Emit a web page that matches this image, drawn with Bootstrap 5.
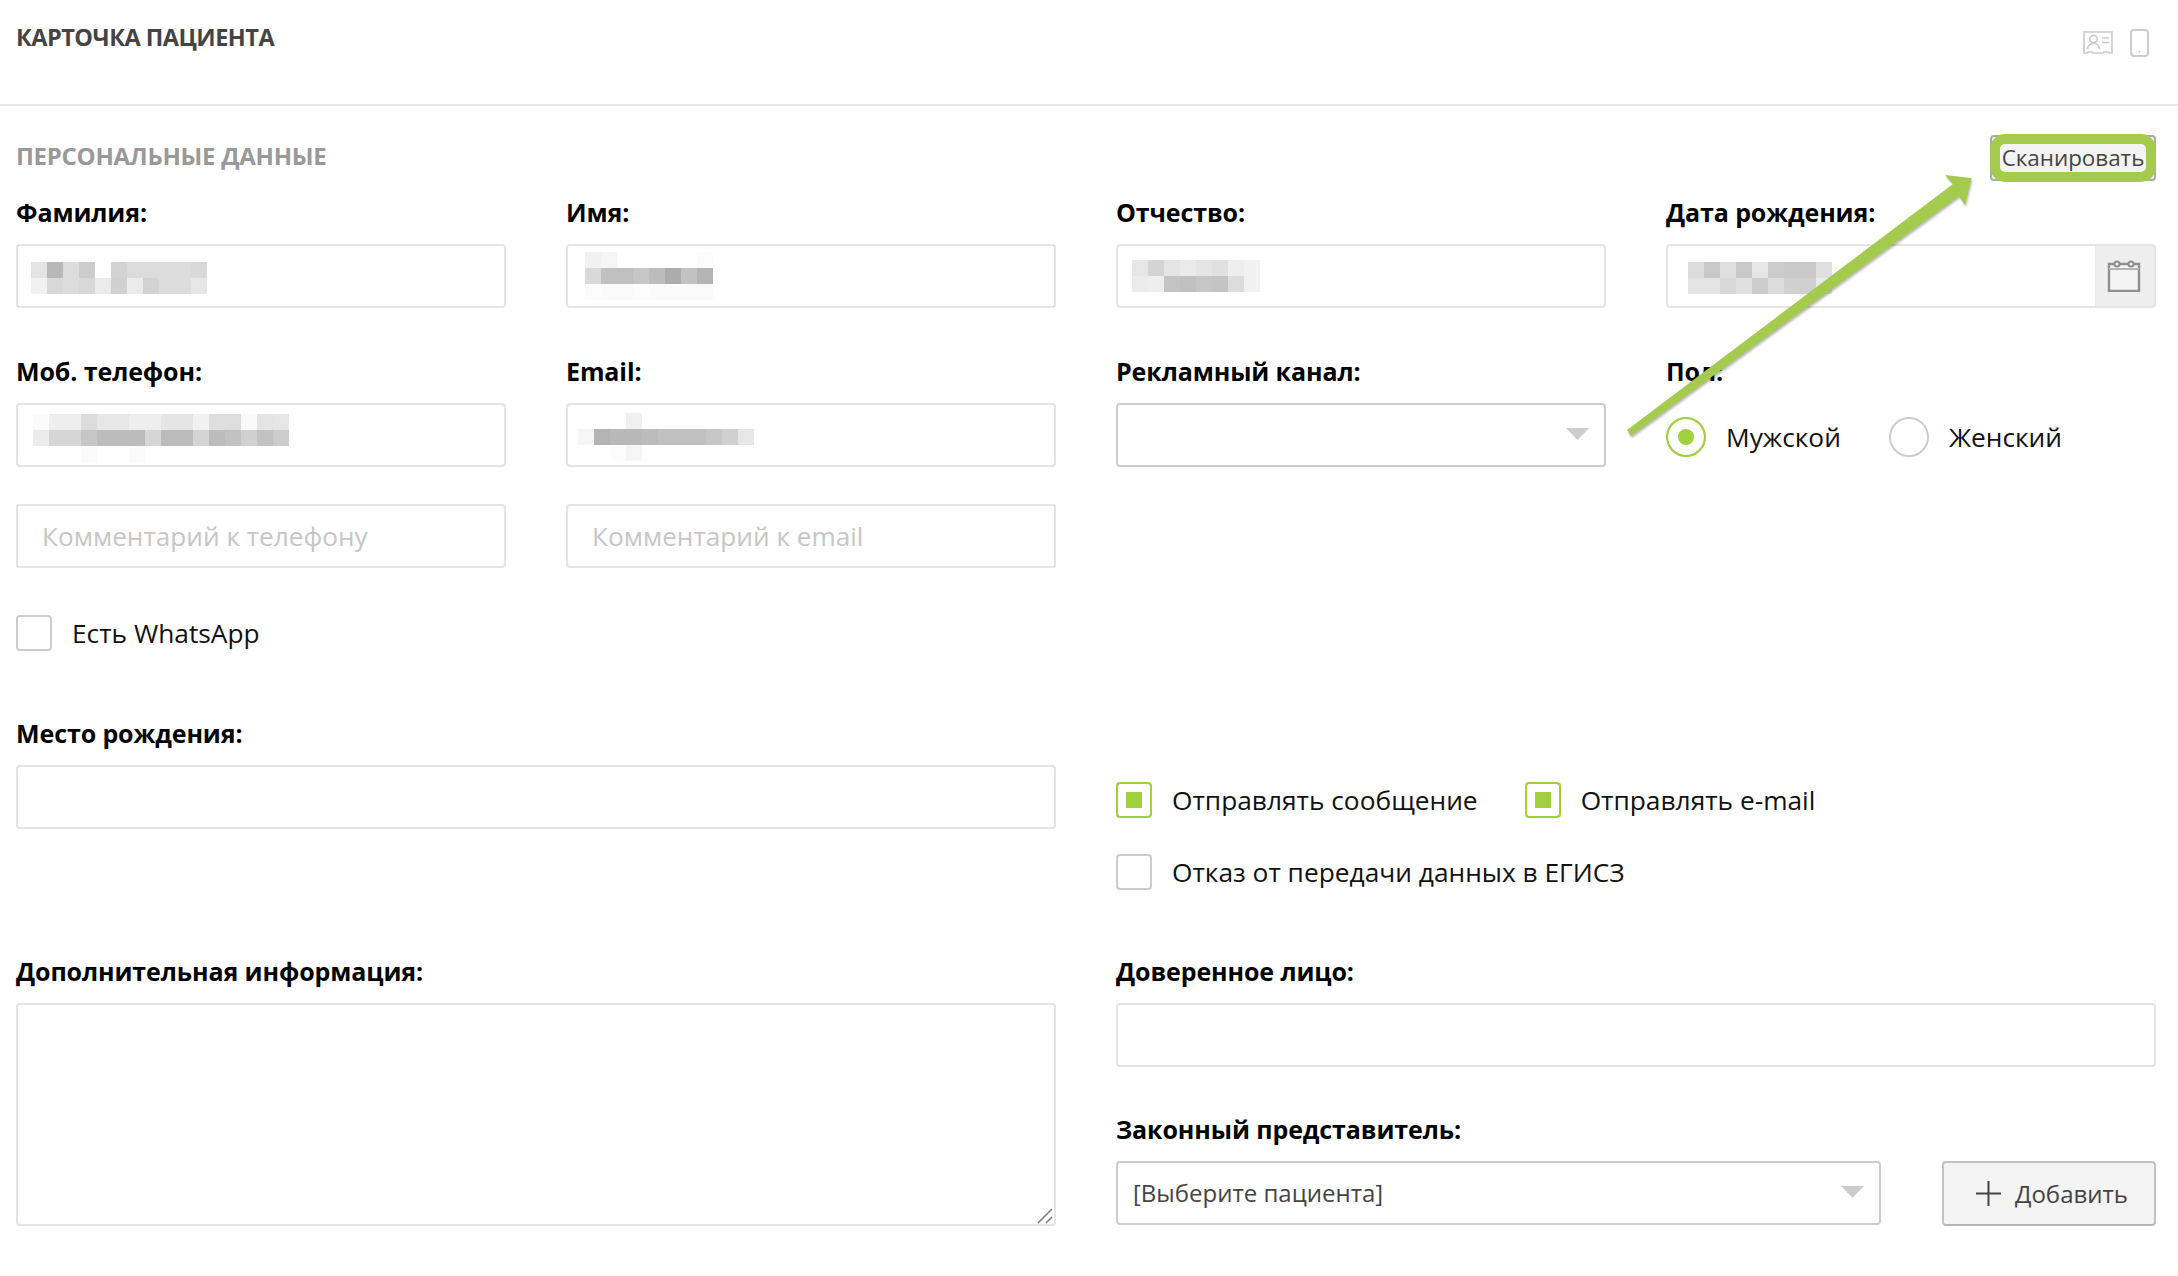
<!DOCTYPE html>
<html lang="ru">
<head>
<meta charset="utf-8">
<title>Карточка пациента</title>
<link href="https://cdn.jsdelivr.net/npm/bootstrap@5.3.0/dist/css/bootstrap.min.css" rel="stylesheet">
<style>
html,body{height:1276px;overflow:hidden}
body{background:#fff;color:#111;font-family:"Open Sans","Noto Sans",sans-serif;font-size:26.3px;position:relative}
.top-head{height:106px;border-bottom:2px solid #e6e6e6;padding:22px 29px 0 16px}
.top-title{font-size:23.5px;font-weight:700;color:#444;line-height:30px;margin:0;text-transform:uppercase;letter-spacing:-.5px}
.top-icons{gap:17px;padding-top:7px}
.page-body{padding:29px 22px 0 16px}
.sec-head{height:46px;margin-bottom:16px}
.sec-title{font-size:24px;font-weight:700;color:#999;margin:0 0 3px;text-transform:uppercase;letter-spacing:-.27px}
.gut{--bs-gutter-x:60px;--bs-gutter-y:0}
.fld-label{display:block;font-weight:700;font-size:25px;line-height:30px;color:#000;margin:0 0 17px;letter-spacing:-.1px}
.fld-input.form-control,.fld-input.form-select{height:64px;border:2px solid #e4e4e4;border-radius:4px;font-size:26.2px;color:#444;padding:0 24px;box-shadow:none;background-color:#fff}
.fld-input::placeholder{color:#c6c6c6;opacity:1}
.fld-input.form-select{border-color:#ccc;padding:0 15px;font-size:24px;background-size:23px 12px;background-position:right 15px top 23px;background-image:url("data:image/svg+xml,%3Csvg xmlns='http://www.w3.org/2000/svg' viewBox='0 0 23 13' preserveAspectRatio='none'%3E%3Cpath fill='%23ccc' d='M0 0h23L11.5 13z'/%3E%3C/svg%3E")}
.area-input.form-control{height:223px;border:2px solid #e4e4e4;border-radius:4px;resize:none}
.area-grip{position:absolute;right:3px;bottom:2px;pointer-events:none}
.row-second{margin-top:48px}
.extra-input{margin-top:37px}
.blur-box{position:relative}
.blur-img{position:absolute;pointer-events:none}
.date-group .form-control{border-right:0;border-radius:4px 0 0 4px}
.date-addon.input-group-text{width:62px;height:64px;background:#eee;border:2px solid #e4e4e4;border-left:0;border-radius:0 4px 4px 0;padding:0;justify-content:center}
.choice{display:flex;align-items:center;margin:0;font-size:26.3px;color:#111;line-height:36px}
.choice .form-check-input{float:none;margin:0 20px 0 0;width:36px;height:36px;border:2px solid #ccc;border-radius:4px;box-shadow:none;flex:none}
.choice .form-check-input:checked{background-color:#a0d03c;background-image:none;border-color:#a0d03c;box-shadow:inset 0 0 0 8px #fff}
.choice .form-check-input[type=radio]{width:40px;height:40px;border-radius:50%;margin-right:20px}
.choice .form-check-input[type=radio]:checked{box-shadow:inset 0 0 0 10px #fff}
.gender-row{gap:48px;margin-top:31px}
.whats-row{margin-top:47px}
.born-row{margin-top:67px}
.send-col{padding-top:63.5px}
.send-line{gap:47px}
.refuse-line{margin-top:36px}
.info-row{margin-top:66.5px}
.legal-label{margin:47px 0 17px}
.add-btn.btn{width:214px;height:65px;background:#f3f3f3;border:2px solid #c2c2c2;border-bottom-color:#b5b5b5;border-radius:4px;color:#444;font-size:24px;padding:0 0 0 6px;flex:none;gap:14px}
.legal-line{gap:61px}
.scan-btn.btn{position:relative;width:166px;height:46px;padding:0;background:#f3f3f3;border:2px solid #aaa;border-radius:4px;color:#444;font-size:22.4px;line-height:42px;white-space:nowrap}
.scan-btn::after{content:"";position:absolute;inset:-3px -2px -3px -2px;border:10px solid #a5cb4e;border-radius:15px;pointer-events:none}
.pointer-arrow{position:absolute;left:0;top:0;pointer-events:none;filter:drop-shadow(1px 2px 1px rgba(0,0,0,.28))}
</style>
</head>
<body>
<header class="top-head d-flex justify-content-between align-items-start">
  <h1 class="top-title">Карточка пациента</h1>
  <div class="top-icons d-flex align-items-center">
    <svg width="30" height="26" viewBox="0 0 30 26" fill="none" stroke="#ccc" stroke-width="1.7"><path d="M1 2h28v21h-3l-1-1h-4l-1 1H10l-1-1H5l-1 1H1z"/><circle cx="10.5" cy="9" r="3.6"/><path d="M4.5 19c.5-4 3-5.500 6-5.500s5.500 1.500 6 5.500"/><path d="M19 8h7M19 12.500h7"/></svg>
    <svg width="19" height="28" viewBox="0 0 19 28" fill="none" stroke="#ccc" stroke-width="2"><rect x="1" y="1" width="17" height="26" rx="3"/><circle cx="9.500" cy="22.500" r=".9" fill="#ccc" stroke="none"/></svg>
  </div>
</header>
<main class="page-body">
  <div class="sec-head d-flex justify-content-between align-items-center">
    <h2 class="sec-title">Персональные данные</h2>
    <button type="button" class="btn scan-btn">Сканировать</button>
  </div>

  <div class="row gut">
    <div class="col-3">
      <label class="fld-label">Фамилия:</label>
      <div class="blur-box">
        <input class="form-control fld-input" type="text">
        <svg class="blur-img" style="left:15px;top:18px" width="176" height="32" viewBox="0 0 11 2" shape-rendering="crispEdges"><path fill="#e4e4e4" d="M0 0h1v1H0z"/><path fill="#b8b8b8" d="M1 0h1v1H1z"/><path fill="#dcdcdc" d="M2 0h1v1H2zM6 0h4v1H6zM2 1h1v1H2zM8 1h2v1H8z"/><path fill="#ccc" d="M3 0h1v1H3z"/><path fill="#d2d2d2" d="M5 0h1v1H5zM7 1h1v1H7z"/><path fill="#d8d8d8" d="M10 0h1v1h-1zM1 1h1v1H1zM3 1h1v1H3z"/><path fill="#f1f1f1" d="M0 1h1v1H0z"/><path fill="#ebebeb" d="M4 1h1v1H4zM6 1h1v1H6z"/><path fill="#d0d0d0" d="M5 1h1v1H5z"/><path fill="#e6e6e6" d="M10 1h1v1h-1z"/></svg>
      </div>
    </div>
    <div class="col-3">
      <label class="fld-label">Имя:</label>
      <div class="blur-box">
        <input class="form-control fld-input" type="text">
        <svg class="blur-img" style="left:19px;top:8px" width="128" height="48" viewBox="0 0 8 3" shape-rendering="crispEdges"><path fill="#f1f1f1" d="M0 0h1v1H0z"/><path fill="#f5f5f5" d="M1 0h1v1H1z"/><path fill="#fcfcfc" d="M7 0h1v1H7zM0 2h1v1H0zM3 2h1v1H3z"/><path fill="#d9d9d9" d="M0 1h1v1H0z"/><path fill="#c0c0c0" d="M1 1h2v1H1z"/><path fill="#c6c6c6" d="M3 1h1v1H3z"/><path fill="#bcbcbc" d="M4 1h1v1H4z"/><path fill="#acacac" d="M5 1h1v1H5z"/><path fill="#c2c2c2" d="M6 1h1v1H6z"/><path fill="#b4b4b4" d="M7 1h1v1H7z"/><path fill="#fafafa" d="M1 2h2v1H1zM4 2h4v1H4z"/></svg>
      </div>
    </div>
    <div class="col-3">
      <label class="fld-label">Отчество:</label>
      <div class="blur-box">
        <input class="form-control fld-input" type="text">
        <svg class="blur-img" style="left:16px;top:16px" width="128" height="32" viewBox="0 0 8 2" shape-rendering="crispEdges"><path fill="#e6e6e6" d="M0 0h1v1H0z"/><path fill="#d4d4d4" d="M1 0h1v1H1z"/><path fill="#e4e4e4" d="M2 0h1v1H2zM4 0h1v1H4z"/><path fill="#eaeaea" d="M3 0h1v1H3z"/><path fill="#e0e0e0" d="M5 0h1v1H5z"/><path fill="#eee" d="M6 0h1v1H6zM1 1h1v1H1z"/><path fill="#f1f1f1" d="M7 0h1v2H7z"/><path fill="#ececec" d="M0 1h1v1H0z"/><path fill="#c4c4c4" d="M2 1h1v1H2zM5 1h1v1H5z"/><path fill="#c0c0c0" d="M3 1h1v1H3z"/><path fill="#c6c6c6" d="M4 1h1v1H4z"/><path fill="#dcdcdc" d="M6 1h1v1H6z"/></svg>
      </div>
    </div>
    <div class="col-3">
      <label class="fld-label">Дата рождения:</label>
      <div class="blur-box">
        <div class="input-group date-group flex-nowrap">
          <input class="form-control fld-input" type="text">
          <span class="input-group-text date-addon">
            <svg width="34" height="32" viewBox="0 0 34 32" fill="none" stroke="#8f8f8f" stroke-width="2.4"><path d="M2 4h30v27H2z" fill="#f4f4f4"/><path d="M2 9h30" stroke="#b5b5b5" stroke-width="2"/><circle cx="10" cy="4" r="2.600" fill="#eee" stroke-width="2"/><circle cx="24" cy="4" r="2.600" fill="#eee" stroke-width="2"/></svg>
          </span>
        </div>
        <svg class="blur-img" style="left:22px;top:18px" width="144" height="32" viewBox="0 0 9 2" shape-rendering="crispEdges"><path fill="#dcdcdc" d="M0 0h1v1H0zM5 1h1v1H5z"/><path fill="#c8c8c8" d="M1 0h1v1H1zM3 0h1v1H3zM6 0h2v1H6z"/><path fill="#e0e0e0" d="M2 0h1v1H2zM8 0h1v1H8zM3 1h1v1H3z"/><path fill="#e6e6e6" d="M4 0h1v1H4z"/><path fill="#ccc" d="M5 0h1v1H5zM4 1h1v1H4z"/><path fill="#e4e4e4" d="M0 1h2v1H0z"/><path fill="#d8d8d8" d="M2 1h1v1H2z"/><path fill="#d0d0d0" d="M6 1h2v1H6z"/><path fill="#eaeaea" d="M8 1h1v1H8z"/></svg>
      </div>
    </div>
  </div>

  <div class="row gut row-second">
    <div class="col-3">
      <label class="fld-label">Моб. телефон:</label>
      <div class="blur-box">
        <input class="form-control fld-input" type="text">
        <svg class="blur-img" style="left:17px;top:11px" width="256" height="48" viewBox="0 0 16 3" shape-rendering="crispEdges"><path fill="#fbfbfb" d="M0 0h1v1H0zM3 2h1v1H3zM6 2h1v1H6z"/><path fill="#eee" d="M1 0h2v1H1zM6 0h2v1H6z"/><path fill="#dcdcdc" d="M3 0h1v1H3z"/><path fill="#e6e6e6" d="M4 0h2v1H4zM15 0h1v1h-1z"/><path fill="#e4e4e4" d="M8 0h2v1H8zM14 0h1v1h-1z"/><path fill="#f1f1f1" d="M10 0h1v1h-1z"/><path fill="#dedede" d="M11 0h2v1h-2z"/><path fill="#f9f9f9" d="M13 0h1v1h-1z"/><path fill="#ececec" d="M0 1h1v1H0z"/><path fill="#d6d6d6" d="M1 1h2v1H1zM7 1h1v1H7z"/><path fill="#c6c6c6" d="M3 1h1v1H3z"/><path fill="#bcbcbc" d="M4 1h3v1H4zM8 1h2v1H8zM11 1h1v1h-1z"/><path fill="#d4d4d4" d="M10 1h1v1h-1z"/><path fill="#c2c2c2" d="M12 1h1v1h-1zM14 1h1v1h-1z"/><path fill="#d0d0d0" d="M13 1h1v1h-1z"/><path fill="#ccc" d="M15 1h1v1h-1z"/></svg>
      </div>
      <input class="form-control fld-input extra-input" type="text" placeholder="Комментарий к телефону">
    </div>
    <div class="col-3">
      <label class="fld-label">Email:</label>
      <div class="blur-box">
        <input class="form-control fld-input" type="text">
        <svg class="blur-img" style="left:12px;top:10px" width="176" height="48" viewBox="0 0 11 3" shape-rendering="crispEdges"><path fill="#f0f0f0" d="M3 0h1v1H3z"/><path fill="#f5f5f5" d="M0 1h1v1H0zM3 2h1v1H3z"/><path fill="#b4b4b4" d="M1 1h1v1H1z"/><path fill="#b8b8b8" d="M2 1h2v1H2z"/><path fill="#bcbcbc" d="M4 1h1v1H4z"/><path fill="#c0c0c0" d="M5 1h3v1H5z"/><path fill="#c6c6c6" d="M8 1h1v1H8z"/><path fill="#d0d0d0" d="M9 1h1v1H9z"/><path fill="#e6e6e6" d="M10 1h1v1h-1z"/><path fill="#fcfcfc" d="M2 2h1v1H2z"/></svg>
      </div>
      <input class="form-control fld-input extra-input" type="text" placeholder="Комментарий к email">
    </div>
    <div class="col-3">
      <label class="fld-label">Рекламный канал:</label>
      <select class="form-select fld-input"><option></option></select>
    </div>
    <div class="col-3">
      <label class="fld-label">Пол:</label>
      <div class="gender-row d-flex">
        <label class="choice"><input class="form-check-input" type="radio" name="sex" checked>Мужской</label>
        <label class="choice"><input class="form-check-input" type="radio" name="sex">Женский</label>
      </div>
    </div>
  </div>

  <label class="choice whats-row"><input class="form-check-input" type="checkbox">Есть WhatsApp</label>

  <div class="row gut born-row">
    <div class="col-6">
      <label class="fld-label">Место рождения:</label>
      <input class="form-control fld-input" type="text">
    </div>
    <div class="col-6 send-col">
      <div class="send-line d-flex">
        <label class="choice"><input class="form-check-input" type="checkbox" checked>Отправлять сообщение</label>
        <label class="choice"><input class="form-check-input" type="checkbox" checked>Отправлять e-mail</label>
      </div>
      <label class="choice refuse-line"><input class="form-check-input" type="checkbox">Отказ от передачи данных в ЕГИСЗ</label>
    </div>
  </div>

  <div class="row gut info-row">
    <div class="col-6">
      <label class="fld-label">Дополнительная информация:</label>
      <div class="blur-box">
        <textarea class="form-control area-input"></textarea>
        <svg class="area-grip" width="17" height="17" viewBox="0 0 17 17" stroke="#777" stroke-width="1.500"><path d="M2 16 16 2M10 16l6-6"/></svg>
      </div>
    </div>
    <div class="col-6">
      <label class="fld-label">Доверенное лицо:</label>
      <input class="form-control fld-input" type="text">
      <label class="fld-label legal-label">Законный представитель:</label>
      <div class="legal-line d-flex align-items-start">
        <select class="form-select fld-input"><option>[Выберите пациента]</option></select>
        <button type="button" class="btn add-btn d-flex align-items-center justify-content-center">
          <svg width="25" height="25" viewBox="0 0 25 25" stroke="#444" stroke-width="2"><path d="M12.500 0v25M0 12.500h25"/></svg>Добавить
        </button>
      </div>
    </div>
  </div>
</main>
<svg class="pointer-arrow" width="2178" height="1276" viewBox="0 0 2178 1276"><path fill="#a5cb4e" d="M1627 430 1953 184 1945 175 1971.500 178 1965 205 1959 196 1631 436z"/></svg>
</body>
</html>
